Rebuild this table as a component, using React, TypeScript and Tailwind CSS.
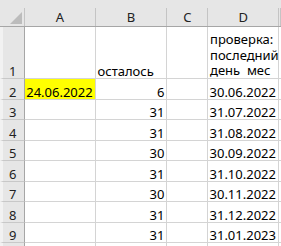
import React from "react";

const font = { fontFamily: '"Noto Sans", "Liberation Sans", sans-serif' };

type Row = { n: string; h: string; a?: string; b?: string; d?: string };

const rows: Row[] = [
  { n: "2", h: "h-[21px]", a: "24.06.2022", b: "6", d: "30.06.2022" },
  { n: "3", h: "h-[20px]", b: "31", d: "31.07.2022" },
  { n: "4", h: "h-[21px]", b: "31", d: "31.08.2022" },
  { n: "5", h: "h-[20px]", b: "30", d: "30.09.2022" },
  { n: "6", h: "h-[21px]", b: "31", d: "31.10.2022" },
  { n: "7", h: "h-[20px]", b: "30", d: "30.11.2022" },
  { n: "8", h: "h-[21px]", b: "31", d: "31.12.2022" },
  { n: "9", h: "h-[20px]", b: "31", d: "31.01.2023" },
  { n: "", h: "h-[20px]" },
];

function ColHead({ w, label }: { w: string; label?: string }) {
  return (
    <div className={`${w} h-full flex flex-col`}>
      <div className="mt-[8px] flex-1 border-r border-[#c4c4c4] flex items-center justify-center text-[13px] leading-none text-[#222]">
        {label}
      </div>
    </div>
  );
}

export default function App() {
  return (
    <div className="w-[281px] h-[246px] overflow-hidden bg-white text-black" style={font}>
      {/* column headers */}
      <div className="flex h-[27px] bg-[#e6e6e6] border-b border-[#a6a6a6]">
        <div className="w-[25px] h-full flex flex-col">
          <div className="mt-[8px] flex-1 border-r border-[#c4c4c4] relative">
            <svg className="absolute left-[10px] top-[4px]" width="12" height="12" viewBox="0 0 12 12">
              <polygon points="12,0 12,12 0,12" fill="#bcbcbc" />
            </svg>
          </div>
        </div>
        <ColHead w="w-[71px]" label="A" />
        <ColHead w="w-[72px]" label="B" />
        <ColHead w="w-[41px]" label="C" />
        <ColHead w="w-[71px]" label="D" />
        <ColHead w="w-[2px]" />
      </div>

      {/* row 1 */}
      <div className="flex h-[52px] text-[13px] leading-none">
        <div className="w-[25px] bg-[#e6e6e6] border-l-[3px] border-l-[#f2f2f2] border-r border-r-[#a6a6a6] border-b border-b-[#c8c8c8] flex items-end pl-[6px] text-[#222]">
          1
        </div>
        <div className="w-[71px] border-r border-b border-[#d4d4d4]" />
        <div className="w-[72px] border-r border-b border-[#d4d4d4] flex items-end pl-[2px]">осталось</div>
        <div className="w-[41px] border-r border-b border-[#d4d4d4]" />
        <div className="w-[71px] border-r border-b border-[#d4d4d4] flex flex-col justify-end pl-[2px]">
          <div className="h-[16px] leading-[16px] whitespace-pre">проверка:</div>
          <div className="h-[16px] leading-[16px] whitespace-pre">последний</div>
          <div className="h-[15px] leading-[15px] whitespace-pre">{"день  мес"}</div>
        </div>
        <div className="w-[2px] border-b border-[#d4d4d4]" />
      </div>

      {/* data rows */}
      {rows.map((r, i) => (
        <div key={i} className={`flex ${r.h} text-[13px] leading-none`}>
          <div className="w-[25px] bg-[#e6e6e6] border-l-[3px] border-l-[#f2f2f2] border-r border-r-[#a6a6a6] border-b border-b-[#c8c8c8] flex items-end pl-[6px] text-[#222]">
            {r.n}
          </div>
          <div
            className={`w-[71px] border-r border-b border-[#d4d4d4] flex items-end justify-end pr-[2px] ${
              r.a ? "bg-[#ffff00]" : ""
            }`}
          >
            {r.a}
          </div>
          <div className="w-[72px] border-r border-b border-[#d4d4d4] flex items-end justify-end pr-[2px]">{r.b}</div>
          <div className="w-[41px] border-r border-b border-[#d4d4d4]" />
          <div className="w-[71px] border-r border-b border-[#d4d4d4] flex items-end justify-end pr-[2px]">{r.d}</div>
          <div className="w-[2px] border-b border-[#d4d4d4]" />
        </div>
      ))}
    </div>
  );
}
